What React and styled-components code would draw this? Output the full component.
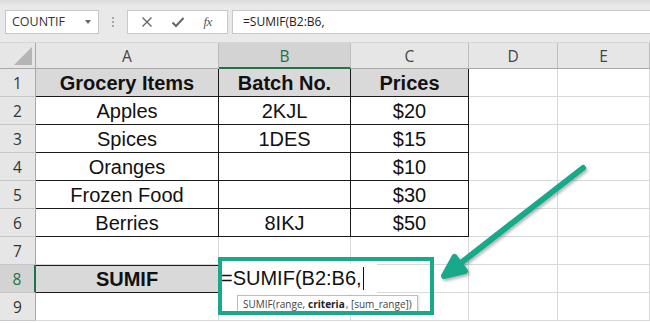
import React from 'react'
import styled, { createGlobalStyle } from 'styled-components'

const GlobalStyle = createGlobalStyle`
	body {
		margin: 0;
		background: #ffffff;
		overflow: hidden;
	}
`

const COLS = [36, 183, 132, 118, 89, 92]
const TEAL = '#19a98a'
const SEL = '#217346'

const Page = styled.div`
	position: relative;
	width: 650px;
	height: 323px;
	overflow: hidden;
	background: #ffffff;
	font-family: 'Liberation Sans', Arial, sans-serif;
`
const FormulaBar = styled.div`
	height: 43px;
	display: flex;
	align-items: center;
	padding: 1px 0 0 5px;
	box-sizing: border-box;
	background: linear-gradient(#dcdcdc 0, #e9e9e9 6px, #e9e9e9 100%);
	border-bottom: 1px solid #d6d6d6;
`
const NameBox = styled.div`
	width: 94px;
	height: 24px;
	box-sizing: border-box;
	background: #fff;
	border: 1px solid #c8c8c8;
	display: flex;
	align-items: center;
	justify-content: space-between;
	padding: 0 7px 0 6px;
	font-family: 'Open Sans', sans-serif;
	font-size: 12.5px;
	color: #333;
`
const Caret = styled.span`
	width: 0;
	height: 0;
	border-left: 3.5px solid transparent;
	border-right: 3.5px solid transparent;
	border-top: 4px solid #666;
`
const Grip = styled.div`
	width: 28px;
	display: flex;
	flex-direction: column;
	align-items: center;
	gap: 2px;
	span {
		width: 2px;
		height: 2px;
		background: #a8a8a8;
	}
`
const FxButtons = styled.div`
	width: 101px;
	height: 24px;
	box-sizing: border-box;
	background: #fff;
	border: 1px solid #c8c8c8;
	display: flex;
	align-items: center;
	justify-content: space-around;
	padding: 0 6px 0 4px;
`
const FxLabel = styled.span`
	font-family: 'Liberation Serif', serif;
	font-style: italic;
	font-size: 13px;
	color: #555;
	letter-spacing: -0.5px;
`
const FormulaInput = styled.div`
	flex: 1;
	height: 24px;
	margin-left: 4px;
	box-sizing: border-box;
	background: #fff;
	border: 1px solid #c8c8c8;
	border-right: none;
	display: flex;
	align-items: center;
	padding-left: 10px;
	font-family: 'Open Sans', sans-serif;
	font-size: 12px;
	color: #222;
`
const Sheet = styled.div`
	display: grid;
	grid-template-columns: ${COLS.map((c) => c + 'px').join(' ')};
	grid-template-rows: 26px repeat(9, 28px);
`
const ColHead = styled.div`
	display: flex;
	align-items: center;
	justify-content: center;
	background: ${(p) => (p.$active ? '#d3d3d3' : '#e6e6e6')};
	border-right: 1px solid #bdbdbd;
	border-bottom: ${(p) => (p.$active ? `2px solid ${SEL}` : '1px solid #a9a9a9')};
	color: ${(p) => (p.$active ? SEL : '#444')};
	font-family: 'Open Sans', sans-serif;
	font-size: 15.5px;
	padding-top: 1px;
`
const Corner = styled.div`
	background: #e6e6e6;
	border-right: 1px solid #a9a9a9;
	border-bottom: 1px solid #a9a9a9;
	display: flex;
	align-items: flex-end;
	justify-content: flex-end;
	padding: 0 3px 3px 0;
`
const RowHead = styled.div`
	display: flex;
	align-items: center;
	justify-content: center;
	background: ${(p) => (p.$active ? '#d3d3d3' : '#e6e6e6')};
	border-right: ${(p) => (p.$active ? `2px solid ${SEL}` : '1px solid #a9a9a9')};
	border-bottom: 1px solid #c6c6c6;
	color: ${(p) => (p.$active ? SEL : '#333')};
	font-family: 'Open Sans', sans-serif;
	font-size: 15.5px;
`
const Cell = styled.div`
	position: relative;
	display: flex;
	align-items: center;
	justify-content: center;
	background: ${(p) => (p.$head ? '#d9d9d9' : '#fff')};
	border-right: 1px solid ${(p) => (p.$boxed ? '#1a1a1a' : '#d9d9d9')};
	border-bottom: 1px solid ${(p) => (p.$boxed ? '#1a1a1a' : '#d9d9d9')};
	${(p) => (p.$top ? 'border-top: 1px solid #1a1a1a;' : '')}
	font-size: 20px;
	font-weight: ${(p) => (p.$head ? 700 : 400)};
	color: #111;
	padding-top: 1px;
`
const EditCell = styled(Cell)`
	overflow: visible;
	z-index: 2;
`
const EditText = styled.div`
	position: absolute;
	left: 0;
	top: -1px;
	width: 158px;
	height: 29px;
	background: #fff;
	display: flex;
	align-items: center;
	padding-left: 2px;
	box-sizing: border-box;
	font-size: 20px;
	color: #111;
	white-space: nowrap;
`
const Cursor = styled.span`
	display: inline-block;
	width: 1px;
	height: 23px;
	background: #111;
	margin-left: 1px;
`
const SelEdge = styled.div`
	position: absolute;
	left: 106px;
	top: -1px;
	width: 26px;
	height: 28px;
	border-top: 2px solid ${SEL};
	border-bottom: 2px solid ${SEL};
	box-sizing: border-box;
	&::after {
		content: '';
		position: absolute;
		right: -3px;
		bottom: -4px;
		width: 5px;
		height: 5px;
		background: ${SEL};
		border: 1px solid #fff;
	}
`
const Tip = styled.div`
	position: absolute;
	left: 18px;
	top: 30px;
	height: 15px;
	padding: 0 5px;
	background: #fff;
	border: 1px solid #bdbdbd;
	box-shadow: 1px 1px 2px rgba(0, 0, 0, 0.15);
	display: flex;
	align-items: center;
	font-family: 'Open Sans', sans-serif;
	font-size: 10px;
	color: #444;
	white-space: nowrap;
	z-index: 3;
	b {
		font-weight: 700;
		color: #222;
		margin: 0 1px 0 3px;
	}
`
const Highlight = styled.div`
	position: absolute;
	left: 218px;
	top: 257px;
	width: 216px;
	height: 58px;
	box-sizing: border-box;
	border: 4px solid ${TEAL};
	z-index: 4;
`
const Overlay = styled.svg`
	position: absolute;
	left: 0;
	top: 0;
	z-index: 5;
	pointer-events: none;
`

const headers = ['A', 'B', 'C', 'D', 'E']
const rows = [
	['Grocery Items', 'Batch No.', 'Prices'],
	['Apples', '2KJL', '$20'],
	['Spices', '1DES', '$15'],
	['Oranges', '', '$10'],
	['Frozen Food', '', '$30'],
	['Berries', '8IKJ', '$50'],
]

const App = () => {
	return (
		<Page>
			<GlobalStyle />
			<FormulaBar>
				<NameBox>
					COUNTIF
					<Caret />
				</NameBox>
				<Grip>
					<span />
					<span />
					<span />
				</Grip>
				<FxButtons>
					<svg width='12' height='12' viewBox='0 0 12 12'>
						<path d='M1.5 1.5 L10.5 10.5 M10.5 1.5 L1.5 10.5' stroke='#666' strokeWidth='1.4' />
					</svg>
					<svg width='14' height='12' viewBox='0 0 14 12'>
						<path d='M1.5 6.5 L5 10 L12.5 2' stroke='#666' strokeWidth='2' fill='none' />
					</svg>
					<FxLabel>fx</FxLabel>
				</FxButtons>
				<FormulaInput>=SUMIF(B2:B6,</FormulaInput>
			</FormulaBar>
			<Sheet>
				<Corner>
					<svg width='18' height='18' viewBox='0 0 18 18'>
						<path d='M18 0 L18 18 L0 18 Z' fill='#b5b5b5' />
					</svg>
				</Corner>
				{headers.map((h) => (
					<ColHead key={h} $active={h === 'B'}>
						{h}
					</ColHead>
				))}
				{rows.map((r, i) => (
					<React.Fragment key={i}>
						<RowHead>{i + 1}</RowHead>
						{r.map((v, j) => (
							<Cell key={j} $boxed $head={i === 0}>
								{v}
							</Cell>
						))}
						<Cell />
						<Cell />
					</React.Fragment>
				))}
				<RowHead>7</RowHead>
				<Cell />
				<Cell />
				<Cell />
				<Cell />
				<Cell />
				<RowHead $active>8</RowHead>
				<Cell $boxed $top $head>
					SUMIF
				</Cell>
				<EditCell>
					<SelEdge />
					<EditText>
						=SUMIF(B2:B6,
						<Cursor />
					</EditText>
					<Tip>
						SUMIF(range,<b>criteria</b>, [sum_range])
					</Tip>
				</EditCell>
				<Cell />
				<Cell />
				<Cell />
				<RowHead>9</RowHead>
				<Cell />
				<Cell />
				<Cell />
				<Cell />
				<Cell />
			</Sheet>
			<Highlight />
			<Overlay width='650' height='323'>
				<defs>
					<filter id='sh' x='-20%' y='-20%' width='140%' height='140%'>
						<feDropShadow dx='1.5' dy='2' stdDeviation='1.5' floodColor='#000' floodOpacity='0.3' />
					</filter>
				</defs>
				<g filter='url(#sh)' stroke={TEAL} strokeWidth='6' strokeLinecap='round' strokeLinejoin='round' fill={TEAL}>
					<line x1='583' y1='168' x2='448' y2='273' />
					<polygon points='444,276 454.5,257 465,271' />
				</g>
			</Overlay>
		</Page>
	)
}

export default App
